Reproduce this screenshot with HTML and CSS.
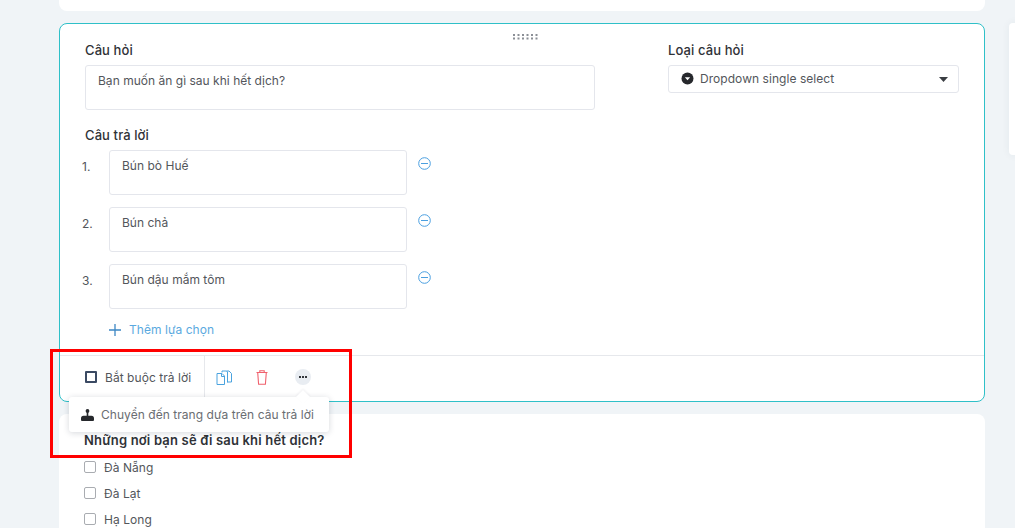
FILE: index.html
```html
<!DOCTYPE html>
<html lang="vi">
<head>
<meta charset="utf-8">
<title>Câu hỏi</title>
<link rel="stylesheet" href="styles.css">
</head>
<body>
<div class="page">
  <main class="column">
    <div class="card top-card"></div>
    <section class="card editor">
      <div class="drag"><svg width="25" height="6" viewBox="0 0 25 6"><g fill="#8b8f96"><rect x="0" y="0" width="2" height="2"/><rect x="4.5" y="0" width="2" height="2"/><rect x="9" y="0" width="2" height="2"/><rect x="13.500" y="0" width="2" height="2"/><rect x="18" y="0" width="2" height="2"/><rect x="22.500" y="0" width="2" height="2"/><rect x="0" y="3.500" width="2" height="2"/><rect x="4.5" y="3.500" width="2" height="2"/><rect x="9" y="3.500" width="2" height="2"/><rect x="13.500" y="3.500" width="2" height="2"/><rect x="18" y="3.500" width="2" height="2"/><rect x="22.500" y="3.500" width="2" height="2"/></g></svg></div>
      <div class="editor-body">
        <div class="top-row">
          <div class="q-col">
            <div class="label">Câu hỏi</div>
            <div class="field q-field">Bạn muốn ăn gì sau khi hết dịch?</div>
          </div>
          <div class="type-col">
            <div class="label">Loại câu hỏi</div>
            <div class="select">
              <svg class="sel-ico" width="13" height="13" viewBox="0 0 13 13"><circle cx="6.500" cy="6.500" r="6" fill="#26282c"/><path d="M3.800 5.200h5.400L6.500 8.200z" fill="#fff"/></svg>
              <span class="sel-text">Dropdown single select</span>
              <svg class="caret" width="9" height="5" viewBox="0 0 9 5"><path d="M0 0h9L4.500 5z" fill="#3a3d42"/></svg>
            </div>
          </div>
        </div>
        <div class="label answers-label">Câu trả lời</div>
        <div class="answers">
          <div class="answer">
            <span class="num">1.</span>
            <div class="field a-field">Bún bò Huế</div>
            <svg class="minus" width="13" height="13" viewBox="0 0 13 13"><circle cx="6.500" cy="6.500" r="5.800" fill="none" stroke="#4a9fe0"/><path d="M3 6.500h7" stroke="#4a9fe0"/></svg>
          </div>
          <div class="answer">
            <span class="num">2.</span>
            <div class="field a-field">Bún chả</div>
            <svg class="minus" width="13" height="13" viewBox="0 0 13 13"><circle cx="6.500" cy="6.500" r="5.800" fill="none" stroke="#4a9fe0"/><path d="M3 6.500h7" stroke="#4a9fe0"/></svg>
          </div>
          <div class="answer">
            <span class="num">3.</span>
            <div class="field a-field">Bún dậu mắm tôm</div>
            <svg class="minus" width="13" height="13" viewBox="0 0 13 13"><circle cx="6.500" cy="6.500" r="5.800" fill="none" stroke="#4a9fe0"/><path d="M3 6.500h7" stroke="#4a9fe0"/></svg>
          </div>
        </div>
        <div class="add">
          <svg width="12" height="12" viewBox="0 0 12 12"><path d="M6 0v12M0 6h12" stroke="#3d87c4" stroke-width="1.300"/></svg>
          <span>Thêm lựa chọn</span>
        </div>
      </div>
      <div class="toolbar">
        <label class="required"><span class="box-dark"></span><span>Bắt buộc trả lời</span></label>
        <div class="tools">
          <svg class="tool" width="16" height="15" viewBox="0 0 16 15"><path d="M6 2.500V1h4.500l1 1v10.500M10.500 1H13l2.500 2.500v8.500h-4" fill="none" stroke="#4aa3df"/><path d="M1 3.500h5l2.500 2.500v8.500H1z" fill="#fff" stroke="#4aa3df"/><path d="M5.500 3.500v3h3" fill="none" stroke="#4aa3df"/></svg>
          <svg class="tool trash" width="12" height="15" viewBox="0 0 12 15"><path d="M.5 2.500h11M3.800 2.500V.7h4.400v1.800M1.700 2.500l.9 11.800h6.800l.9-11.800" fill="none" stroke="#f0616d" stroke-width="1.100"/></svg>
          <span class="more"><svg width="8" height="2" viewBox="0 0 8 2"><path d="M0 0h2v2H0zM3 0h2v2H3zM6 0h2v2H6z" fill="#33363b"/></svg></span>
        </div>
      </div>
    </section>
    <section class="card next">
      <div class="next-title">Những nơi bạn sẽ đi sau khi hết dịch?</div>
      <div class="opt"><span class="box"></span><span>Đà Nẵng</span></div>
      <div class="opt"><span class="box"></span><span>Đà Lạt</span></div>
      <div class="opt"><span class="box"></span><span>Hạ Long</span></div>
    </section>
  </main>
  <aside class="side"></aside>
</div>
<div class="menu">
  <span class="menu-arrow"></span>
  <svg width="13" height="12" viewBox="0 0 13 12"><circle cx="6.500" cy="1.900" r="1.900" fill="#26282c"/><rect x="5.700" y="3" width="1.600" height="4" fill="#26282c"/><path d="M2.500 6.800h8q2.500 0 2.500 2.600V11a1 1 0 0 1-1 1H1a1 1 0 0 1-1-1V9.400q0-2.600 2.500-2.600z" fill="#26282c"/></svg>
  <span>Chuyển đến trang dựa trên câu trả lời</span>
</div>
<div class="highlight"></div>
</body>
</html>
```
FILE: styles.css
```css
* { box-sizing: border-box; }
html, body { margin: 0; height: 100%; }
body {
  background: #f0f4f7;
  font-family: Inter, "Noto Sans", sans-serif;
  font-size: 12px;
  letter-spacing: .05px;
  color: #53565b;
  overflow: hidden;
  position: relative;
}
.page { display: flex; height: 528px; padding-left: 59px; overflow: hidden; }
.column { width: 926px; flex: none; display: flex; flex-direction: column; gap: 12px; }
.card { background: #fff; border-radius: 8px; flex: none; }
.top-card { height: 11px; border-radius: 0 0 8px 8px; }
.editor { height: 379px; border: 1px solid #2fc0c8; position: relative; }
.drag { position: absolute; top: 10px; left: 453px; line-height: 0; }
.editor-body { height: 332px; padding: 18px 25px 0; border-bottom: 1px solid #e6e8ec; }
.top-row { display: flex; }
.q-col { width: 510px; }
.type-col { width: 291px; margin-left: 73px; }
.label { color: #2f3237; font-size: 13px; font-weight: 500; line-height: 16px; letter-spacing: .1px; }
.field { border: 1px solid #e4e6ec; border-radius: 3px; padding: 7px 12px; line-height: 16px; background: #fff; letter-spacing: .02px; }
.q-field { margin-top: 7px; height: 45px; }
.select {
  margin-top: 7px; height: 28px; border: 1px solid #e4e6ec; border-radius: 3px;
  display: flex; align-items: center; padding: 0 10px 0 12px;
}
.sel-ico { margin: -2px 6px 0 0; flex: none; }
.sel-text { flex: 1; line-height: 16px; }
.caret { flex: none; }
.answers-label { margin-top: 17px; }
.answers { margin-top: 7px; display: flex; flex-direction: column; gap: 12px; }
.answer { display: flex; align-items: flex-start; height: 45px; }
.num { width: 27px; margin-left: -3px; padding-top: 9px; line-height: 16px; }
.a-field { width: 298px; height: 45px; padding-top: 7px; }
.minus { margin: 7px 0 0 11px; flex: none; }
.add { margin-top: 13px; margin-left: 24px; display: flex; align-items: center; gap: 8px; color: #5aa9e0; line-height: 16px; }
.toolbar { display: flex; height: 45px; align-items: stretch; }
.required { display: flex; align-items: center; gap: 8px; padding-left: 25px; width: 145px; border-right: 1px solid #e6e8ec; height: 42px; }
.box-dark { width: 12px; height: 12px; border: 2px solid #3b4a63; border-radius: 1px; flex: none; }
.tools { display: flex; align-items: center; height: 42px; padding-left: 11px; }
.tool { flex: none; }
.trash { margin-left: 24px; }
.more {
  margin-left: 27px; width: 16px; height: 16px; border-radius: 50%; background: #e9edf2;
  display: flex; align-items: center; justify-content: center;
}
.next { height: 200px; padding: 18px 25px 0; }
.next-title { color: #2f3237; font-size: 13px; font-weight: 600; line-height: 16px; margin-bottom: 6px; letter-spacing: .18px; }
.opt { display: flex; align-items: center; gap: 8px; height: 26px; }
.box { width: 12px; height: 12px; border: 1px solid #a9acb1; border-radius: 2px; flex: none; }
.side { position: absolute; left: 1009px; top: 23px; width: 20px; height: 132px; background: #fff; border-radius: 4px; box-shadow: 0 0 8px rgba(40, 60, 90, .06); }
.menu {
  position: absolute; left: 69px; top: 397px; width: 260px; height: 35px; background: #fff;
  border-radius: 3px; box-shadow: 0 1px 6px rgba(30, 40, 60, .18);
  display: flex; align-items: center; gap: 7px; padding-left: 12px; color: #6a6d72;
}
.menu-arrow {
  position: absolute; left: 229px; top: -5px; width: 10px; height: 10px; background: #fff;
  transform: rotate(45deg); box-shadow: -1px -1px 2px rgba(30, 40, 60, .06);
}
.highlight { position: absolute; left: 50px; top: 349px; width: 302px; height: 109px; border: 3px solid #ff0000; }
```
